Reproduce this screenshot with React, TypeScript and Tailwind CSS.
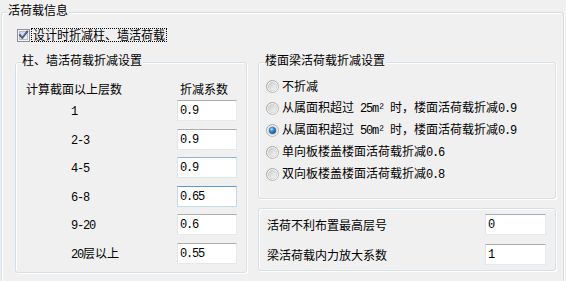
import React from "react";

const N = ({ children }: { children: React.ReactNode }) => (
  <span className="font-['Liberation_Mono',monospace] text-[12px] tracking-[-1.2px]">{children}</span>
);

function Group({
  title,
  className = "",
  children,
}: {
  title?: string;
  className?: string;
  children?: React.ReactNode;
}) {
  return (
    <div
      className={`relative rounded-[3px] border border-[#d5dfe5] shadow-[inset_1px_1px_0_#ffffff,1px_1px_0_#ffffff] ${className}`}
    >
      {title && (
        <div className="absolute left-[5px] top-[-10px] bg-[#f0f0f0] px-[1px] leading-[14px] whitespace-nowrap">
          {title}
        </div>
      )}
      {children}
    </div>
  );
}

function Box({
  children,
  variant = "normal",
  w = "w-[60px]",
}: {
  children: React.ReactNode;
  variant?: "normal" | "focus" | "hover";
  w?: string;
}) {
  const cls =
    variant === "focus"
      ? "border-[#c5daed] border-t-[#5a9bd5]"
      : variant === "hover"
      ? "border-[#dbe6f0] border-t-[#8fb6dc]"
      : "border-[#e3e9ef] border-t-[#abadb3] border-l-[#e2e3ea]";
  return (
    <div className={`h-[21px] ${w} shrink-0 bg-white border ${cls} flex items-center pl-[2px] leading-[14px]`}>
      {children}
    </div>
  );
}

function CheckBox() {
  return (
    <svg width="13" height="13" viewBox="0 0 13 13" className="shrink-0">
      <defs>
        <linearGradient id="cbg" x1="0" y1="0" x2="1" y2="1">
          <stop offset="0" stopColor="#cfd3d8" />
          <stop offset="1" stopColor="#f7f7f7" />
        </linearGradient>
      </defs>
      <rect x="0.5" y="0.5" width="12" height="12" fill="#f4f4f4" stroke="#8e8f8f" />
      <rect x="2.5" y="2.5" width="8" height="8" fill="url(#cbg)" stroke="#b9bdc2" />
      <path d="M3 6.2 L5.3 8.8 L10.2 2.6" fill="none" stroke="#3c4f8f" strokeWidth="1.9" strokeLinecap="square" />
      <path d="M3.6 6.3 L5.3 8.2 L9.6 2.8" fill="none" stroke="#6f86c6" strokeWidth="0.6" />
    </svg>
  );
}

function Radio({ checked = false, id }: { checked?: boolean; id: string }) {
  return (
    <svg width="13" height="13" viewBox="0 0 13 13" className="shrink-0">
      <defs>
        <linearGradient id={`ro${id}`} x1="0" y1="0" x2="1" y2="1">
          <stop offset="0" stopColor="#9a9a9a" />
          <stop offset="1" stopColor="#c4c4c4" />
        </linearGradient>
        <linearGradient id={`ri${id}`} x1="0" y1="0" x2="1" y2="1">
          <stop offset="0" stopColor="#cbcbcb" />
          <stop offset="1" stopColor="#f7f7f7" />
        </linearGradient>
        <radialGradient id={`rs${id}`} cx="0.35" cy="0.3" r="0.8">
          <stop offset="0" stopColor="#b8e4fb" />
          <stop offset="0.45" stopColor="#2c8ad8" />
          <stop offset="1" stopColor="#0b3f8a" />
        </radialGradient>
      </defs>
      <circle cx="6.5" cy="6.5" r="6" fill="#f3f3f3" stroke={`url(#ro${id})`} />
      <circle cx="6.5" cy="6.5" r="4.2" fill={`url(#ri${id})`} stroke="#c9c9c9" strokeWidth="0.6" />
      {checked && <circle cx="6.5" cy="6.5" r="3.3" fill={`url(#rs${id})`} stroke="#174d8c" strokeWidth="0.5" />}
    </svg>
  );
}

const rows: { label: React.ReactNode; value: string; mb: string; variant?: "normal" | "focus" | "hover" }[] = [
  { label: <N>1</N>, value: "0.9", mb: "mb-[8px]" },
  { label: <N>2-3</N>, value: "0.9", mb: "mb-[7px]" },
  { label: <N>4-5</N>, value: "0.9", mb: "mb-[8px]", variant: "hover" },
  { label: <N>6-8</N>, value: "0.65", mb: "mb-[7px]", variant: "focus" },
  { label: <N>9-20</N>, value: "0.6", mb: "mb-[8px]" },
  {
    label: (
      <>
        <N>20</N>层以上
      </>
    ),
    value: "0.55",
    mb: "",
  },
];

const radios: { text: React.ReactNode; checked?: boolean }[] = [
  { text: "不折减" },
  {
    text: (
      <>
        从属面积超过<N> 25m² </N>时，楼面活荷载折减<N>0.9</N>
      </>
    ),
  },
  {
    text: (
      <>
        从属面积超过<N> 50m² </N>时，楼面活荷载折减<N>0.9</N>
      </>
    ),
    checked: true,
  },
  {
    text: (
      <>
        单向板楼盖楼面活荷载折减<N>0.6</N>
      </>
    ),
  },
  {
    text: (
      <>
        双向板楼盖楼面活荷载折减<N>0.8</N>
      </>
    ),
  },
];

export default function App() {
  return (
    <div className="w-[566px] h-[281px] overflow-hidden bg-[#f0f0f0] text-black text-[12px] leading-[14px] font-['Noto_Sans_CJK_SC',sans-serif]">
      <div className="pt-[12px] pl-[1px]">
        <Group title="活荷载信息" className="w-[563px] h-[280px] pl-[13px] pt-[15px]">
          {/* checkbox row */}
          <div className="flex items-center h-[14px] ml-[2px]">
            <CheckBox />
            <div className="ml-[1px] h-[14px] border border-dotted border-black flex items-center px-[1px] whitespace-nowrap">
              设计时折减柱、墙活荷载
            </div>
          </div>

          <div className="flex mt-[20px] gap-[11px]">
            {/* left group */}
            <Group title="柱、墙活荷载折减设置" className="w-[232px] h-[211px]">
              <div className="flex mt-[19px] ml-[10px] h-[14px] items-center">
                <span className="w-[154px]">计算截面以上层数</span>
                <span>折减系数</span>
              </div>
              <div className="mt-[4px] flex flex-col">
                {rows.map((r, i) => (
                  <div key={i} className={`flex items-center h-[21px] ${r.mb}`}>
                    <div className="ml-[55px] w-[106px] whitespace-nowrap">{r.label}</div>
                    <Box variant={r.variant}>
                      <N>{r.value}</N>
                    </Box>
                  </div>
                ))}
              </div>
            </Group>

            {/* right column */}
            <div className="flex flex-col gap-[9px] w-[298px]">
              <Group title="楼面梁活荷载折减设置" className="h-[137px] pt-[15px] pl-[7px]">
                <div className="flex flex-col gap-[6px]">
                  {radios.map((r, i) => (
                    <div key={i} className="flex items-center h-[16px]">
                      <Radio checked={r.checked} id={String(i)} />
                      <span className="ml-[3px] whitespace-nowrap">{r.text}</span>
                    </div>
                  ))}
                </div>
              </Group>
              <Group className="h-[63px] pt-[5px] pl-[8px]">
                <div className="flex flex-col gap-[9px]">
                  <div className="flex items-center h-[21px]">
                    <span className="w-[218px]">活荷不利布置最高层号</span>
                    <Box w="w-[61px]">
                      <N>0</N>
                    </Box>
                  </div>
                  <div className="flex items-center h-[21px]">
                    <span className="w-[218px]">梁活荷载内力放大系数</span>
                    <Box w="w-[61px]">
                      <N>1</N>
                    </Box>
                  </div>
                </div>
              </Group>
            </div>
          </div>
        </Group>
      </div>
    </div>
  );
}
